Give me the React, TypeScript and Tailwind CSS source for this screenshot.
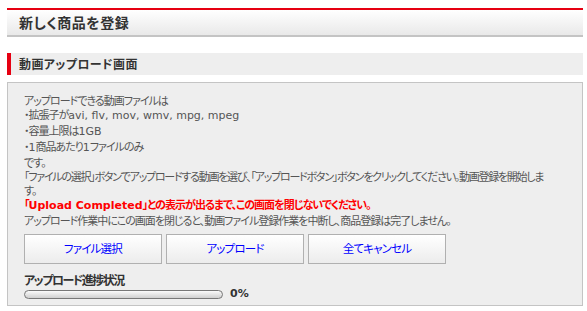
import React from "react";

const font = { fontFamily: '"Noto Sans CJK JP", "Noto Sans", sans-serif' };
const latin = { fontFamily: '"DejaVu Sans", "Noto Sans CJK JP", sans-serif' };

function L({ children }: { children: React.ReactNode }) {
  return (
    <span className="tracking-normal" style={latin}>
      {children}
    </span>
  );
}

export default function App() {
  return (
    <div
      className="w-[587px] h-[311px] overflow-hidden bg-white pl-[7px] pr-[4px] pt-[8px] text-[#555]"
      style={font}
    >
      <div className="border-t-2 border-[#e60012] h-[29px] border-b-2 border-b-[#c4c4c4] bg-gradient-to-b from-white to-[#e9e9e9] flex items-center pl-[12px]">
        <span className="text-[14px] font-bold text-[#333] [font-feature-settings:'palt'] tracking-[0.5px]">新しく商品を登録</span>
      </div>
      <div className="mt-[16px] h-[22px] bg-[#eeeeee] border-l-4 border-[#e60012] flex items-center pl-[8px]">
        <span className="text-[12px] font-bold text-[#333] [font-feature-settings:'palt'] tracking-[0.4px]">動画アップロード画面</span>
      </div>
      <div className="mt-[7px] h-[224px] bg-[#eeeeee] border border-[#c4c4c4] pl-[16px] pt-[10px]">
        <div className="text-[11px] leading-[14px] whitespace-nowrap [font-feature-settings:'palt'] tracking-[-1px]">
          <div>アップロードできる動画ファイルは</div>
          <div>
            ・拡張子が<L>avi, flv, mov, wmv, mpg, mpeg</L>
          </div>
          <div>
            ・容量上限は<L>1GB</L>
          </div>
          <div>
            ・<L>1</L>商品あたり<L>1</L>ファイルのみ
          </div>
          <div>です。</div>
          <div className="tracking-[-1.25px]">「ファイルの選択」ボタンでアップロードする動画を選び、「アップロードボタン」ボタンをクリックしてください。動画登録を開始しま</div>
          <div>す。</div>
          <div className="font-bold text-[#ff0000]">
            「<L>Upload Completed</L>」との表示が出るまで、この画面を閉じないでください。
          </div>
          <div>アップロード作業中にこの画面を閉じると、動画ファイル登録作業を中断し、商品登録は完了しません。</div>
        </div>
        <div className="mt-[7px] flex gap-[4px]">
          {["ファイル選択", "アップロード", "全てキャンセル"].map((t) => (
            <button
              key={t}
              className="w-[138px] h-[30px] border border-[#b0b0b0] bg-gradient-to-b from-white to-[#ececec] text-[11.5px] tracking-[-0.8px] text-[#0000ff] [font-feature-settings:'palt'] flex items-center justify-center"
              style={font}
            >
              {t}
            </button>
          ))}
        </div>
        <div className="mt-[9px] text-[12px] leading-[14px] font-bold text-[#333] [font-feature-settings:'palt'] tracking-[-1.5px]">
          アップロード進捗状況
        </div>
        <div className="mt-[1px] flex items-center gap-[7px]">
          <div className="w-[199px] h-[9px] rounded-full border border-[#777] bg-gradient-to-b from-[#fafafa] to-[#cfcfcf]" />
          <span className="text-[11px] font-bold text-[#333] leading-[12px]" style={latin}>
            0%
          </span>
        </div>
      </div>
    </div>
  );
}
